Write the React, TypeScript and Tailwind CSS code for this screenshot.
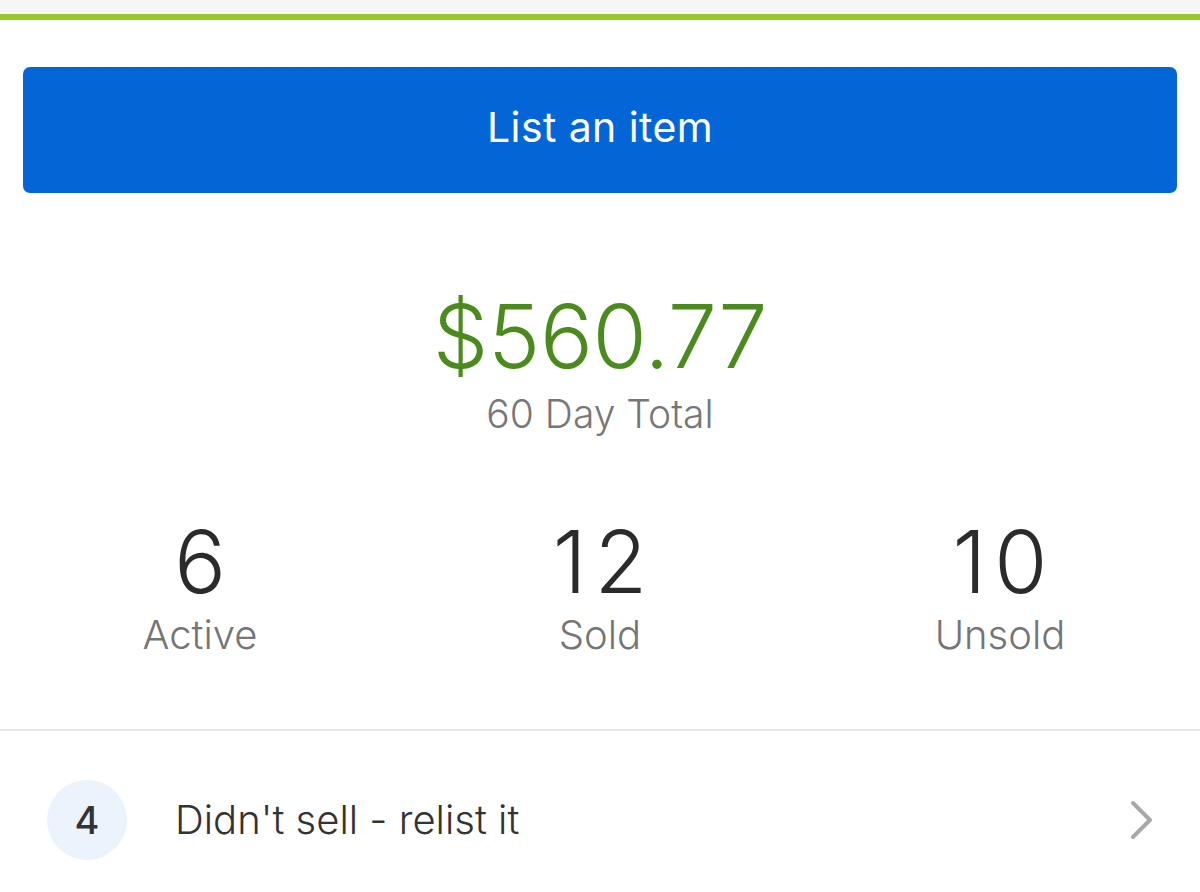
import React from "react";

export default function App() {
  return (
    <div className="w-[1200px] h-[892px] bg-white overflow-hidden" style={{ fontFamily: "Inter, 'Noto Sans', sans-serif" }}>
      <div className="h-[14px] bg-[#f7f6f6]" />
      <div className="h-[6px] bg-[#97c728]" />
      <div className="px-[23px] pt-[47px]">
        <button className="w-full h-[126px] rounded-[7px] bg-[#0466d6] text-white text-[41px] font-normal tracking-[0.4px] flex items-center justify-center pb-[4px]">
          List an item
        </button>
      </div>
      <div className="flex flex-col items-center mt-[99px]">
        <div className="text-[88px] leading-none font-light text-[#4b8b1d] tracking-[-0.3px]">$560.77</div>
        <div className="text-[39px] leading-none text-[#777777] mt-[14px] font-light">60 Day Total</div>
      </div>
      <div className="grid grid-cols-3 mt-[86px]">
        {[
          ["6", "Active"],
          ["12", "Sold"],
          ["10", "Unsold"],
        ].map(([n, l]) => (
          <div key={l} className="flex flex-col items-center">
            <div className="text-[86px] leading-none font-light text-[#2b2b2b] tracking-[8px] pl-[8px]">{n}</div>
            <div className="text-[40px] leading-none font-light text-[#757575] mt-[10px]">{l}</div>
          </div>
        ))}
      </div>
      <div className="h-[2px] bg-[#e6e6e6] mt-[74px]" />
      <div className="flex items-center h-[180px] pl-[47px] pr-[46px] -mt-[1px]">
        <div className="w-[80px] h-[80px] rounded-full bg-[#ebf3fd] flex items-center justify-center text-[38px] font-medium text-[#333]">4</div>
        <div className="ml-[48px] text-[40px] font-light text-[#333] flex-1">Didn't sell - relist it</div>
        <svg width="24" height="40" viewBox="0 0 24 40" fill="none">
          <path d="M3 3 L20 20 L3 37" stroke="#a8a8a8" strokeWidth="4" strokeLinecap="round" strokeLinejoin="round" />
        </svg>
      </div>
    </div>
  );
}
